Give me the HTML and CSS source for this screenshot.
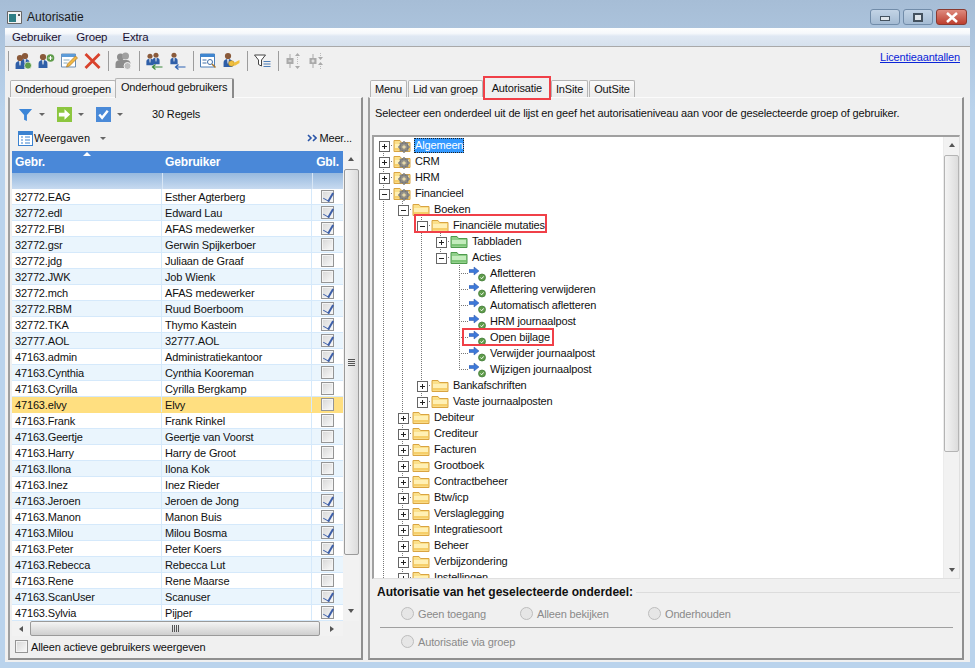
FILE: index.html
```html
<!DOCTYPE html>
<html lang="nl">
<head>
    <meta charset="UTF-8">
    <title>Autorisatie</title>
    <link rel="stylesheet" href="styles.css">
</head>
<body>
    <svg class="defs" width="0" height="0">
        <defs>
            <symbol id="folder" viewBox="0 0 18 14">
                <path d="M1 2.500h6l1.500 2H17v9H1z" fill="#fbe08a" stroke="#d9a441"/>
                <path d="M2 6h14v6.500H2z" fill="#fff0b5"/>
                <path d="M2 10h14v2.500H2z" fill="#f6cf6a"/>
            </symbol>
            <symbol id="folder-green" viewBox="0 0 18 14">
                <path d="M1 2.500h6l1.500 2H17v9H1z" fill="#8fd08a" stroke="#4f9a4d"/>
                <path d="M2 6h14v6.500H2z" fill="#c4ecbd"/>
                <path d="M2 10h14v2.500H2z" fill="#7cc476"/>
            </symbol>
            <symbol id="gear" viewBox="0 0 10 10">
                <circle cx="5" cy="5" r="3.200" fill="none" stroke="#777" stroke-width="2"/>
                <path d="M5 0v10M0 5h10M1.500 1.500l7 7M8.500 1.500l-7 7" stroke="#888" stroke-width="1.300"/>
                <circle cx="5" cy="5" r="1.500" fill="#e8d9a8"/>
            </symbol>
            <symbol id="action" viewBox="0 0 20 17">
                <path d="M0 4.500h5V2l5 4-5 4V7.500H0z" fill="#3d78d8" stroke="#2a55a8" stroke-width=".5"/>
                <circle cx="13" cy="12.500" r="3.500" fill="#5f9c4a" stroke="#3e7533" stroke-width=".7"/>
                <path d="M11.400 12.500l1.200 1.300 2.100-2.400" fill="none" stroke="#fff" stroke-width="1"/>
            </symbol>
            <symbol id="person" viewBox="0 0 12 18">
                <circle cx="6" cy="4.500" r="3.500" fill="#8a5a3a"/>
                <path d="M1 17v-5q0-4 5-4t5 4v5z" fill="#2f5fa8"/>
                <path d="M5 8h2l-.5 5h-1z" fill="#eee"/>
            </symbol>
            <symbol id="grey-group" viewBox="0 0 18 18">
                <circle cx="6" cy="5" r="3.500" fill="#8d8d8d"/>
                <circle cx="11" cy="4" r="3.500" fill="#a0a0a0"/>
                <path d="M1 16v-4q0-4 5-4h6q4 0 4 4v4z" fill="#8d8d8d"/>
                <circle cx="13" cy="14" r="3.500" fill="#bbb" stroke="#f0f0f0"/>
            </symbol>
            <symbol id="spread-out" viewBox="0 0 16 18">
                <path d="M4.500 2v14" stroke="#aaa"/>
                <path d="M1 6h7v6H1z" fill="#aaa"/>
                <path d="M3 9h3" stroke="#f0f0f0"/>
                <path d="M12 1L9.500 4h5zM12 17l-2.500-3h5z" fill="#aaa"/>
                <path d="M12 5v8" stroke="#bbb" stroke-dasharray="1 1"/>
            </symbol>
            <symbol id="spread-in" viewBox="0 0 16 18">
                <path d="M4.500 2v14" stroke="#aaa"/>
                <path d="M1 6h7v6H1z" fill="#aaa"/>
                <path d="M3 9h3M4.500 7.500v3" stroke="#f0f0f0"/>
                <path d="M12 8L9.500 5h5zM12 10l-2.500 3h5z" fill="#aaa"/>
                <path d="M12 1v3M12 14v3" stroke="#bbb" stroke-dasharray="1 1"/>
            </symbol>
        </defs>
    </svg>

    <div class="window">
        <header class="titlebar">
            <svg class="app-icon" viewBox="0 0 15 13" width="15" height="13">
                <path d="M.5.500h14v12H.500z" fill="#f4f4f4" stroke="#666"/>
                <path d="M2 3h7v8H2z" fill="#2f7f86"/>
                <path d="M11 3h2v2h-2z" fill="#555"/>
            </svg>
            <span class="title-text">Autorisatie</span>
            <div class="caption-buttons">
                <div class="caption-btn"><i class="glyph-min"></i></div>
                <div class="caption-btn"><i class="glyph-max"></i></div>
                <div class="caption-btn close">
                    <svg viewBox="0 0 14 11" width="14" height="11"><path d="M2 1l10 9M12 1L2 10" stroke="#fff" stroke-width="2.600"/></svg>
                </div>
            </div>
        </header>

        <main class="client">
            <nav class="menubar">
                <span>Gebruiker</span>
                <span>Groep</span>
                <span>Extra</span>
            </nav>

            <div class="toolbar">
                <i class="sep"></i>
                <svg class="tool" viewBox="0 0 18 18"><use href="#person" x="5" width="11" height="16"/><use href="#person" y="2" width="11" height="16"/><circle cx="13.500" cy="13.500" r="3.500" fill="#5f9c4a" stroke="#fff" stroke-width=".6"/></svg>
                <svg class="tool" viewBox="0 0 18 18"><use href="#person" y="1" width="11" height="16"/><circle cx="13" cy="6" r="3.800" fill="#5f9c4a"/><path d="M11 6h4M13 4v4" stroke="#fff"/></svg>
                <svg class="tool" viewBox="0 0 18 18"><path d="M1 2h14v13H1z" fill="#fff" stroke="#6d8fb5"/><path d="M1 2h14v3H1z" fill="#5c9bd8"/><path d="M3 8h6M3 11h4" stroke="#8ab"/><path d="M6 15l1-3 8-8 2 2-8 8z" fill="#f1b743" stroke="#a9772a" stroke-width=".7"/></svg>
                <svg class="tool" viewBox="0 0 18 18"><path d="M2 2l14 14M16 2L2 16" stroke="#d9422c" stroke-width="2.800"/></svg>
                <i class="sep"></i>
                <svg class="tool" viewBox="0 0 18 18"><use href="#grey-group" width="18" height="18"/></svg>
                <i class="sep"></i>
                <svg class="tool" viewBox="0 0 18 18"><use href="#person" x="6" width="9" height="13"/><use href="#person" y="1" width="9" height="13"/><path d="M17 15H7M10 12.500L7 15l3 2.500" fill="none" stroke="#3c8a3c" stroke-width="1.200"/></svg>
                <svg class="tool" viewBox="0 0 18 18"><use href="#person" x="1" width="9" height="13"/><path d="M17 15H7M10 12.500L7 15l3 2.500" fill="none" stroke="#2c62b4" stroke-width="1.200"/></svg>
                <i class="sep"></i>
                <svg class="tool" viewBox="0 0 18 18"><path d="M1 2h14v13H1z" fill="#fff" stroke="#4d7fb8"/><path d="M1 2h14v3H1z" fill="#3f86d0"/><path d="M3 8h4M3 11h4" stroke="#3f6ea8"/><circle cx="10.500" cy="10" r="2.500" fill="#fff" stroke="#3f6ea8"/><path d="M12.500 12l3.500 3.500" stroke="#a8742c" stroke-width="1.500"/></svg>
                <svg class="tool" viewBox="0 0 18 18"><use href="#person" width="11" height="16"/><circle cx="9" cy="11.500" r="2.800" fill="#f0bf3f" stroke="#b58920" stroke-width=".6"/><path d="M11 11l6-3v3l-5 3z" fill="#f0bf3f"/></svg>
                <i class="sep"></i>
                <svg class="tool" viewBox="0 0 18 18"><path d="M1 3h11L8 8v6l-3-1.500V8z" fill="#fff" stroke="#444"/><path d="M10 9.500h7M10 12h7M10 14.500h7" stroke="#4f7fb8"/></svg>
                <i class="sep"></i>
                <svg class="tool" viewBox="0 0 16 18"><use href="#spread-out" width="16" height="18"/></svg>
                <svg class="tool" viewBox="0 0 16 18"><use href="#spread-in" width="16" height="18"/></svg>
                <a class="licence" href="#">Licentieaantallen</a>
            </div>

            <div class="panes">
                <section class="pane-left">
                    <div class="tabs">
                        <div class="tab wide">Onderhoud groepen</div>
                        <div class="tab active">Onderhoud gebruikers</div>
                    </div>
                    <div class="tab-body left-body">
                        <div class="grid-tools">
                            <svg class="gt-icon" viewBox="0 0 16 16"><path d="M1 2h14L9.500 8.500V15l-3-1.500v-5z" fill="#3c86d8"/></svg><i class="drop"></i>
                            <svg class="gt-icon" viewBox="0 0 16 16"><path d="M0 0h16v16H0z" fill="#8cc63f"/><path d="M2 6h6V2.500L14 8l-6 5.500V10H2z" fill="#fff"/></svg><i class="drop"></i>
                            <svg class="gt-icon" viewBox="0 0 16 16"><path d="M0 0h16v16H0z" fill="#4a8ad8"/><path d="M3.500 8l3 3.500L12.500 4" fill="none" stroke="#fff" stroke-width="2.600"/></svg><i class="drop"></i>
                            <span class="row-count">30 Regels</span>
                        </div>
                        <div class="view-tools">
                            <svg class="view-icon" viewBox="0 0 15 15"><path d="M0 0h15v15H0z" fill="#3b82d0"/><path d="M1 4h13v10H1z" fill="#fff"/><path d="M3 6h2M3 9h2M3 12h2M7 6h5M7 9h5M7 12h5" stroke="#3b82d0"/></svg>
                            <span class="view-name">Weergaven</span><i class="drop"></i>
                            <span class="more">
                                <svg viewBox="0 0 10 8" width="10" height="8"><path d="M1 1l3 3-3 3M6 1l3 3-3 3" fill="none" stroke="#2a55a8" stroke-width="1.600"/></svg>
                                Meer...
                            </span>
                        </div>

                        <div class="grid-wrap">
                            <div class="grid">
                                <div class="grid-head">
                                    <div class="col-a">Gebr.<i class="sort"></i></div>
                                    <div class="col-b">Gebruiker</div>
                                    <div class="col-c">Gbl.</div>
                                </div>
                                <div class="grid-filter">
                                    <div class="col-a"></div>
                                    <div class="col-b"></div>
                                    <div class="col-c"></div>
                                </div>
                                <div class="grid-row"><div class="col-a">32772.EAG</div><div class="col-b">Esther Agterberg</div><div class="col-c"><i class="chk on"></i></div></div>
                                <div class="grid-row"><div class="col-a">32772.edl</div><div class="col-b">Edward Lau</div><div class="col-c"><i class="chk on"></i></div></div>
                                <div class="grid-row"><div class="col-a">32772.FBI</div><div class="col-b">AFAS medewerker</div><div class="col-c"><i class="chk on"></i></div></div>
                                <div class="grid-row"><div class="col-a">32772.gsr</div><div class="col-b">Gerwin Spijkerboer</div><div class="col-c"><i class="chk"></i></div></div>
                                <div class="grid-row"><div class="col-a">32772.jdg</div><div class="col-b">Juliaan de Graaf</div><div class="col-c"><i class="chk"></i></div></div>
                                <div class="grid-row"><div class="col-a">32772.JWK</div><div class="col-b">Job Wienk</div><div class="col-c"><i class="chk"></i></div></div>
                                <div class="grid-row"><div class="col-a">32772.mch</div><div class="col-b">AFAS medewerker</div><div class="col-c"><i class="chk on"></i></div></div>
                                <div class="grid-row"><div class="col-a">32772.RBM</div><div class="col-b">Ruud Boerboom</div><div class="col-c"><i class="chk on"></i></div></div>
                                <div class="grid-row"><div class="col-a">32772.TKA</div><div class="col-b">Thymo Kastein</div><div class="col-c"><i class="chk on"></i></div></div>
                                <div class="grid-row"><div class="col-a">32777.AOL</div><div class="col-b">32777.AOL</div><div class="col-c"><i class="chk on"></i></div></div>
                                <div class="grid-row"><div class="col-a">47163.admin</div><div class="col-b">Administratiekantoor</div><div class="col-c"><i class="chk on"></i></div></div>
                                <div class="grid-row"><div class="col-a">47163.Cynthia</div><div class="col-b">Cynthia Kooreman</div><div class="col-c"><i class="chk"></i></div></div>
                                <div class="grid-row"><div class="col-a">47163.Cyrilla</div><div class="col-b">Cyrilla Bergkamp</div><div class="col-c"><i class="chk"></i></div></div>
                                <div class="grid-row current"><div class="col-a">47163.elvy</div><div class="col-b">Elvy</div><div class="col-c"><i class="chk"></i></div></div>
                                <div class="grid-row"><div class="col-a">47163.Frank</div><div class="col-b">Frank Rinkel</div><div class="col-c"><i class="chk"></i></div></div>
                                <div class="grid-row"><div class="col-a">47163.Geertje</div><div class="col-b">Geertje van Voorst</div><div class="col-c"><i class="chk"></i></div></div>
                                <div class="grid-row"><div class="col-a">47163.Harry</div><div class="col-b">Harry de Groot</div><div class="col-c"><i class="chk"></i></div></div>
                                <div class="grid-row"><div class="col-a">47163.Ilona</div><div class="col-b">Ilona Kok</div><div class="col-c"><i class="chk"></i></div></div>
                                <div class="grid-row"><div class="col-a">47163.Inez</div><div class="col-b">Inez Rieder</div><div class="col-c"><i class="chk"></i></div></div>
                                <div class="grid-row"><div class="col-a">47163.Jeroen</div><div class="col-b">Jeroen de Jong</div><div class="col-c"><i class="chk on"></i></div></div>
                                <div class="grid-row"><div class="col-a">47163.Manon</div><div class="col-b">Manon Buis</div><div class="col-c"><i class="chk on"></i></div></div>
                                <div class="grid-row"><div class="col-a">47163.Milou</div><div class="col-b">Milou Bosma</div><div class="col-c"><i class="chk on"></i></div></div>
                                <div class="grid-row"><div class="col-a">47163.Peter</div><div class="col-b">Peter Koers</div><div class="col-c"><i class="chk on"></i></div></div>
                                <div class="grid-row"><div class="col-a">47163.Rebecca</div><div class="col-b">Rebecca Lut</div><div class="col-c"><i class="chk"></i></div></div>
                                <div class="grid-row"><div class="col-a">47163.Rene</div><div class="col-b">Rene Maarse</div><div class="col-c"><i class="chk"></i></div></div>
                                <div class="grid-row"><div class="col-a">47163.ScanUser</div><div class="col-b">Scanuser</div><div class="col-c"><i class="chk on"></i></div></div>
                                <div class="grid-row"><div class="col-a">47163.Sylvia</div><div class="col-b">Pijper</div><div class="col-c"><i class="chk on"></i></div></div>
                            </div>
                            <div class="vscroll grid-scroll">
                                <i class="arrow up"></i>
                                <div class="thumb"><i class="grip"></i></div>
                                <i class="arrow down"></i>
                            </div>
                        </div>
                        <div class="hscroll">
                            <i class="arrow left"></i>
                            <div class="hthumb"><i class="hgrip"></i></div>
                            <i class="arrow right"></i>
                        </div>
                        <label class="active-only"><i class="chk large"></i>Alleen actieve gebruikers weergeven</label>
                    </div>
                </section>

                <section class="pane-right">
                    <div class="tabs">
                        <div class="tab">Menu</div>
                        <div class="tab">Lid van groep</div>
                        <div class="tab active marked">Autorisatie</div>
                        <div class="tab">InSite</div>
                        <div class="tab">OutSite</div>
                    </div>
                    <div class="tab-body right-body">
                        <p class="hint">Selecteer een onderdeel uit de lijst en geef het autorisatieniveau aan voor de geselecteerde groep of gebruiker.</p>
                        <div class="tree-box">
                            <div class="tree">
                                <div class="node"><i class="exp plus first"></i><svg class="ico"><use href="#folder"/></svg><i class="cog"><svg><use href="#gear"/></svg></i><span class="label selected">Algemeen</span></div>
                                <div class="node"><i class="exp plus"></i><svg class="ico"><use href="#folder"/></svg><i class="cog"><svg><use href="#gear"/></svg></i><span class="label">CRM</span></div>
                                <div class="node"><i class="exp plus"></i><svg class="ico"><use href="#folder"/></svg><i class="cog"><svg><use href="#gear"/></svg></i><span class="label">HRM</span></div>
                                <div class="node"><i class="exp minus"></i><svg class="ico"><use href="#folder"/></svg><i class="cog"><svg><use href="#gear"/></svg></i><span class="label">Financieel</span></div>
                                <div class="node"><i class="gut v"></i><i class="exp minus"></i><svg class="ico"><use href="#folder"/></svg><span class="label">Boeken</span></div>
                                <div class="node"><i class="gut v"></i><i class="gut v"></i><i class="exp minus"></i><svg class="ico"><use href="#folder"/></svg><span class="label">Financi&euml;le mutaties</span><i class="mark mark-fin"></i></div>
                                <div class="node"><i class="gut v"></i><i class="gut v"></i><i class="gut v"></i><i class="exp plus"></i><svg class="ico"><use href="#folder-green"/></svg><span class="label">Tabbladen</span></div>
                                <div class="node"><i class="gut v"></i><i class="gut v"></i><i class="gut v"></i><i class="exp minus last"></i><svg class="ico"><use href="#folder-green"/></svg><span class="label">Acties</span></div>
                                <div class="node"><i class="gut v"></i><i class="gut v"></i><i class="gut v"></i><i class="gut"></i><i class="leaf"></i><svg class="act"><use href="#action"/></svg><span class="label">Afletteren</span></div>
                                <div class="node"><i class="gut v"></i><i class="gut v"></i><i class="gut v"></i><i class="gut"></i><i class="leaf"></i><svg class="act"><use href="#action"/></svg><span class="label">Aflettering verwijderen</span></div>
                                <div class="node"><i class="gut v"></i><i class="gut v"></i><i class="gut v"></i><i class="gut"></i><i class="leaf"></i><svg class="act"><use href="#action"/></svg><span class="label">Automatisch afletteren</span></div>
                                <div class="node"><i class="gut v"></i><i class="gut v"></i><i class="gut v"></i><i class="gut"></i><i class="leaf"></i><svg class="act"><use href="#action"/></svg><span class="label">HRM journaalpost</span></div>
                                <div class="node"><i class="gut v"></i><i class="gut v"></i><i class="gut v"></i><i class="gut"></i><i class="leaf"></i><svg class="act"><use href="#action"/></svg><span class="label">Open bijlage</span><i class="mark mark-open"></i></div>
                                <div class="node"><i class="gut v"></i><i class="gut v"></i><i class="gut v"></i><i class="gut"></i><i class="leaf"></i><svg class="act"><use href="#action"/></svg><span class="label">Verwijder journaalpost</span></div>
                                <div class="node"><i class="gut v"></i><i class="gut v"></i><i class="gut v"></i><i class="gut"></i><i class="leaf end"></i><svg class="act"><use href="#action"/></svg><span class="label">Wijzigen journaalpost</span></div>
                                <div class="node"><i class="gut v"></i><i class="gut v"></i><i class="exp plus"></i><svg class="ico"><use href="#folder"/></svg><span class="label">Bankafschriften</span></div>
                                <div class="node"><i class="gut v"></i><i class="gut v"></i><i class="exp plus last"></i><svg class="ico"><use href="#folder"/></svg><span class="label">Vaste journaalposten</span></div>
                                <div class="node"><i class="gut v"></i><i class="exp plus"></i><svg class="ico"><use href="#folder"/></svg><span class="label">Debiteur</span></div>
                                <div class="node"><i class="gut v"></i><i class="exp plus"></i><svg class="ico"><use href="#folder"/></svg><span class="label">Crediteur</span></div>
                                <div class="node"><i class="gut v"></i><i class="exp plus"></i><svg class="ico"><use href="#folder"/></svg><span class="label">Facturen</span></div>
                                <div class="node"><i class="gut v"></i><i class="exp plus"></i><svg class="ico"><use href="#folder"/></svg><span class="label">Grootboek</span></div>
                                <div class="node"><i class="gut v"></i><i class="exp plus"></i><svg class="ico"><use href="#folder"/></svg><span class="label">Contractbeheer</span></div>
                                <div class="node"><i class="gut v"></i><i class="exp plus"></i><svg class="ico"><use href="#folder"/></svg><span class="label">Btw/icp</span></div>
                                <div class="node"><i class="gut v"></i><i class="exp plus"></i><svg class="ico"><use href="#folder"/></svg><span class="label">Verslaglegging</span></div>
                                <div class="node"><i class="gut v"></i><i class="exp plus"></i><svg class="ico"><use href="#folder"/></svg><span class="label">Integratiesoort</span></div>
                                <div class="node"><i class="gut v"></i><i class="exp plus"></i><svg class="ico"><use href="#folder"/></svg><span class="label">Beheer</span></div>
                                <div class="node"><i class="gut v"></i><i class="exp plus"></i><svg class="ico"><use href="#folder"/></svg><span class="label">Verbijzondering</span></div>
                                <div class="node"><i class="gut v"></i><i class="exp plus"></i><svg class="ico"><use href="#folder"/></svg><span class="label">Instellingen</span></div>
                            </div>
                            <div class="vscroll tree-scroll">
                                <i class="arrow up"></i>
                                <div class="thumb tree-thumb"></div>
                                <i class="arrow down"></i>
                            </div>
                        </div>
                        <div class="level-title"><span>Autorisatie van het geselecteerde onderdeel:</span><i></i></div>
                        <div class="radios">
                            <label class="radio r1"><i class="dot"></i>Geen toegang</label>
                            <label class="radio r2"><i class="dot"></i>Alleen bekijken</label>
                            <label class="radio"><i class="dot"></i>Onderhouden</label>
                        </div>
                        <hr class="level-rule">
                        <div class="radios via">
                            <label class="radio"><i class="dot"></i>Autorisatie via groep</label>
                        </div>
                    </div>
                </section>
            </div>
        </main>
    </div>
</body>
</html>
```

FILE: styles.css
```css
* {
    box-sizing: border-box;
}
html, body {
    margin: 0;
    height: 100%;
}
body {
    font-family: "Liberation Sans", Arial, sans-serif;
    font-size: 11px;
    letter-spacing: -.15px;
    color: #111;
    background: #b9d1ea;
    overflow: hidden;
}
i {
    display: block;
    font-style: normal;
}
.defs {
    display: block;
    height: 0;
}
.window {
    width: 975px;
    height: 668px;
    display: flex;
    flex-direction: column;
    background: linear-gradient(#a6bdd6, #bad3ec 110px);
}

/* title bar */
.titlebar {
    height: 28px;
    flex: none;
    display: flex;
    align-items: center;
    padding: 6px 8px 0 7px;
    color: #1a1a1a;
}
.app-icon {
    margin-right: 5px;
}
.title-text {
    font-size: 12px;
    letter-spacing: 0;
}
.caption-buttons {
    margin-left: auto;
    display: flex;
    gap: 3px;
}
.caption-btn {
    width: 30px;
    height: 16px;
    border: 1px solid #718ca9;
    border-radius: 3px;
    background: linear-gradient(#c3d4e6, #a4bbd3);
    display: flex;
    align-items: center;
    justify-content: center;
}
.caption-btn.close {
    width: 31px;
    border-color: #8a3a30;
    background: linear-gradient(#de8a7e, #bd3f2f);
}
.glyph-min {
    width: 10px;
    height: 5px;
    margin-top: 3px;
    background: #dfe5ea;
    border: 1px solid #44525f;
}
.glyph-max {
    width: 10px;
    height: 9px;
    background: #dfe5ea;
    border: 2px solid #44525f;
}

/* client area */
.client {
    flex: 1;
    margin: 0 5px 6px;
    background: #f0f0f0;
    display: flex;
    flex-direction: column;
}
.menubar {
    height: 19px;
    flex: none;
    display: flex;
    align-items: center;
    gap: 15px;
    padding-left: 7px;
    font-size: 11.500px;
    color: #1b1030;
    background: linear-gradient(#fdfefe, #f5f8fb 30%, #dfe8f3 45%, #d6e1ee);
    border-bottom: 1px solid #a9a9a9;
}
.toolbar {
    height: 28px;
    flex: none;
    display: flex;
    align-items: center;
    margin-left: -1px;
    padding-right: 10px;
}
.sep {
    width: 1px;
    height: 20px;
    margin: 0 3px 0 4px;
    background: #9c9c9c;
}
.tool {
    width: 19px;
    height: 18px;
    flex: none;
    margin: 0 2px;
}
.licence {
    margin-left: auto;
    color: #0a24d8;
    align-self: flex-start;
    margin-top: 4px;
}
.panes {
    flex: 1;
    display: flex;
    padding: 2px 6px 2px 3px;
    gap: 5px;
    min-height: 0;
}
.pane-left {
    width: 355px;
    flex: none;
    display: flex;
    flex-direction: column;
}
.pane-right {
    flex: 1;
    display: flex;
    flex-direction: column;
}

/* tabs */
.tabs {
    height: 20px;
    flex: none;
    display: flex;
    align-items: flex-end;
    padding-left: 2px;
    position: relative;
    z-index: 1;
}
.tab {
    height: 17px;
    padding: 2px 4px 0;
    border: 1px solid #b5b5b5;
    border-bottom: none;
    border-radius: 2px 2px 0 0;
    background: linear-gradient(#fafafa, #ececec);
    white-space: nowrap;
    margin-right: 1px;
}
.tab.wide {
    margin-right: -1px;
}
.tab.active {
    height: 20px;
    padding: 2px 5px 0;
    margin: 0 0 -1px;
    background: #f0f0f0;
    border-right: 2px solid #8a8a8a;
}
.tab.marked {
    height: 24px;
    padding: 0 7px;
    margin: 0 0 -3px -1px;
    border: 2px solid #f04048;
    border-radius: 0;
    line-height: 20px;
}
.tab-body {
    flex: 1;
    min-height: 0;
    border: 1px solid #fbfbfb;
    border-right: 2px solid #8f8f8f;
    border-bottom: 2px solid #8f8f8f;
    border-left: 2px solid #a0a0a0;
    background: #f0f0f0;
    display: flex;
    flex-direction: column;
}
.left-body {
    padding: 7px 2px 0 2px;
}
.right-body {
    padding: 0 2px 0 2px;
}

/* left pane */
.grid-tools {
    height: 18px;
    flex: none;
    display: flex;
    align-items: center;
    padding-left: 6px;
}
.gt-icon {
    width: 15px;
    height: 15px;
    margin-right: 6px;
}
.drop {
    width: 0;
    height: 0;
    border: 3px solid transparent;
    border-top: 3px solid #666;
    border-bottom: none;
    margin-right: 12px;
}
.row-count {
    margin-left: 17px;
}
.view-tools {
    height: 22px;
    flex: none;
    margin: 4px 0 2px;
    display: flex;
    align-items: center;
    padding-left: 6px;
    gap: 1px;
}
.view-name {
    letter-spacing: 0;
}
.view-tools .drop {
    margin-left: 9px;
}
.view-icon {
    width: 15px;
    height: 15px;
}
.more {
    margin-left: auto;
    margin-right: 7px;
}
.grid-wrap {
    flex: none;
    display: flex;
    height: 470px;
    overflow: hidden;
}
.grid {
    width: 331px;
    flex: none;
}
.grid-head, .grid-filter, .grid-row {
    display: grid;
    grid-template-columns: 150px 150px 31px;
}
.grid-head {
    height: 22px;
    background: #4a88d8;
    color: #fff;
    font-weight: bold;
    font-size: 12px;
    line-height: 22px;
}
.grid-head .col-a, .grid-head .col-b {
    position: relative;
    padding-left: 3px;
}
.grid-head .col-c {
    text-align: center;
}
.sort {
    position: absolute;
    left: 71px;
    top: 1px;
    width: 0;
    height: 0;
    border: 4px solid transparent;
    border-bottom: 4px solid #fff;
    border-top: none;
}
.grid-filter {
    height: 16px;
    background: linear-gradient(#97b9de, #c7daf0);
}
.grid-filter div {
    border-left: 1px solid #d8e6f5;
}
.grid-filter div:first-child {
    border-left: none;
}
.grid-row {
    height: 16px;
    line-height: 16px;
    border-bottom: 1px solid #d5e9fb;
    background: #eaf5fd;
}
.grid-row:nth-child(odd) {
    background: #fff;
}
.grid-row.current {
    background: #ffdf80;
    border-bottom-color: #ffdf80;
}
.grid-row .col-a, .grid-row .col-b {
    padding-left: 3px;
    border-right: 1px solid #d5e9fb;
    white-space: nowrap;
    overflow: hidden;
}
.grid-row .col-c {
    display: flex;
    justify-content: center;
    align-items: center;
}
.chk {
    width: 13px;
    height: 13px;
    border: 1px solid #959595;
    box-shadow: inset 0 0 0 1px #f4f4f4;
    background: linear-gradient(135deg, #d6d6d6, #fafafa);
    position: relative;
}
.chk.on::after {
    content: "";
    position: absolute;
    left: 3px;
    top: 0;
    width: 5px;
    height: 9px;
    border-right: 2px solid #3d5fa8;
    border-bottom: 1px solid #3d5fa8;
    transform: rotate(30deg);
}
.chk.large {
    flex: none;
    margin-right: 3px;
}
.vscroll {
    width: 16px;
    flex: none;
    background: #f2f2f2;
    display: flex;
    flex-direction: column;
    align-items: center;
}
.tree-scroll {
    border-left: 1px solid #ececec;
}
.arrow {
    width: 0;
    height: 0;
    flex: none;
    border: 3px solid transparent;
}
.arrow.up {
    border-bottom: 4px solid #555;
    border-top: none;
    margin: 6px 0 8px;
}
.arrow.down {
    border-top: 4px solid #555;
    border-bottom: none;
    margin: auto 0 8px;
}
.tree-scroll .arrow.down {
    margin-bottom: 6px;
}
.arrow.left {
    border-right: 4px solid #555;
    border-left: none;
    margin: 0 7px;
}
.arrow.right {
    border-left: 4px solid #555;
    border-right: none;
    margin: 0 9px 0 10px;
}
.thumb {
    width: 15px;
    height: 386px;
    border: 1px solid #9a9a9a;
    border-radius: 2px;
    background: linear-gradient(90deg, #f4f4f4, #dcdcdc);
    display: flex;
    align-items: center;
    justify-content: center;
}
.tree-thumb {
    height: 297px;
    border-color: #b4b4b4;
}
.grip {
    width: 7px;
    height: 7px;
    background: repeating-linear-gradient(#555 0 1px, transparent 1px 2px);
}
.hscroll {
    width: 331px;
    height: 15px;
    flex: none;
    display: flex;
    align-items: center;
    background: #f2f2f2;
}
.hthumb {
    flex: 1;
    height: 15px;
    border: 1px solid #9a9a9a;
    border-radius: 2px;
    background: linear-gradient(#f4f4f4, #cfcfcf);
    display: flex;
    align-items: center;
    justify-content: center;
}
.hgrip {
    width: 7px;
    height: 7px;
    background: repeating-linear-gradient(90deg, #555 0 1px, transparent 1px 2px);
}
.active-only {
    display: flex;
    align-items: center;
    margin: 4px 0 0 3px;
}

/* right pane */
.hint {
    margin: 9px 0 0 3px;
    height: 28px;
    white-space: nowrap;
}
.tree-box {
    flex: none;
    height: 444px;
    display: flex;
    background: #fff;
    border: 1px solid #e0e0e0;
    border-top: 2px solid #a0a0a0;
    border-left: 2px solid #a0a0a0;
    overflow: hidden;
}
.tree {
    flex: 1;
    min-width: 0;
}
.node {
    height: 16px;
    display: flex;
    align-items: center;
    position: relative;
    white-space: nowrap;
}
.gut {
    width: 19px;
    height: 16px;
    flex: none;
}
.gut.v {
    background: repeating-linear-gradient(#777 0 1px, transparent 1px 2px) 9px 0 / 1px 100% no-repeat;
}
.exp {
    width: 19px;
    height: 16px;
    flex: none;
    position: relative;
    background:
        repeating-linear-gradient(#777 0 1px, transparent 1px 2px) 9px 0 / 1px 100% no-repeat,
        repeating-linear-gradient(90deg, #777 0 1px, transparent 1px 2px) 9px 8px / 10px 1px no-repeat;
}
.exp.first {
    background:
        repeating-linear-gradient(#777 0 1px, transparent 1px 2px) 9px 8px / 1px 8px no-repeat,
        repeating-linear-gradient(90deg, #777 0 1px, transparent 1px 2px) 9px 8px / 10px 1px no-repeat;
}
.exp.last {
    background:
        repeating-linear-gradient(#777 0 1px, transparent 1px 2px) 9px 0 / 1px 8px no-repeat,
        repeating-linear-gradient(90deg, #777 0 1px, transparent 1px 2px) 9px 8px / 10px 1px no-repeat;
}
.exp::before {
    content: "";
    position: absolute;
    left: 5px;
    top: 4px;
    width: 9px;
    height: 9px;
    border: 1px solid #666;
    background: linear-gradient(#222, #222) center / 5px 1px no-repeat, #fff;
}
.exp.plus::before {
    background:
        linear-gradient(#222, #222) center / 5px 1px no-repeat,
        linear-gradient(#222, #222) center / 1px 5px no-repeat,
        #fff;
}
.leaf {
    width: 19px;
    height: 16px;
    flex: none;
    background:
        repeating-linear-gradient(#777 0 1px, transparent 1px 2px) 9px 0 / 1px 100% no-repeat,
        repeating-linear-gradient(90deg, #777 0 1px, transparent 1px 2px) 9px 8px / 10px 1px no-repeat;
}
.leaf.end {
    background:
        repeating-linear-gradient(#777 0 1px, transparent 1px 2px) 9px 0 / 1px 8px no-repeat,
        repeating-linear-gradient(90deg, #777 0 1px, transparent 1px 2px) 9px 8px / 10px 1px no-repeat;
}
.ico {
    width: 18px;
    height: 14px;
    flex: none;
    overflow: visible;
}
.cog {
    width: 12px;
    height: 12px;
    margin: 3px 1px 0 -13px;
    flex: none;
}
.cog svg {
    display: block;
    width: 12px;
    height: 12px;
}
.act {
    width: 20px;
    height: 17px;
    flex: none;
}
.label {
    margin-left: 3px;
    padding: 0 1px;
    line-height: 15px;
}
.act + .label {
    margin-left: 0;
}
.label.selected {
    background: #3399ff;
    color: #fff;
    outline: 1px dotted #222;
    outline-offset: -1px;
}
.mark {
    position: absolute;
    border: 2px solid #f04048;
    pointer-events: none;
}
.mark-fin {
    left: 40px;
    top: -3px;
    width: 133px;
    height: 19px;
}
.mark-open {
    left: 88px;
    top: -1px;
    width: 92px;
    height: 18px;
}
.level-title {
    display: flex;
    align-items: center;
    gap: 3px;
    margin: 6px 0 0 5px;
    font-weight: bold;
    font-size: 12px;
    letter-spacing: 0;
}
.level-title i {
    flex: 1;
    height: 1px;
    background: #dcdcdc;
}
.radios {
    display: flex;
    margin: 8px 0 0 29px;
    color: #8a8a8a;
}
.radios.via {
    margin-top: 7px;
}
.radio {
    display: flex;
    align-items: center;
    gap: 4px;
}
.r1 {
    width: 119px;
}
.r2 {
    width: 128px;
}
.dot {
    width: 13px;
    height: 13px;
    border-radius: 50%;
    border: 1px solid #bdbdbd;
    background: #e6e6e6;
}
.level-rule {
    margin: 7px 7px 0 8px;
    border: none;
    height: 1px;
    background: #a0a0a0;
}
```
